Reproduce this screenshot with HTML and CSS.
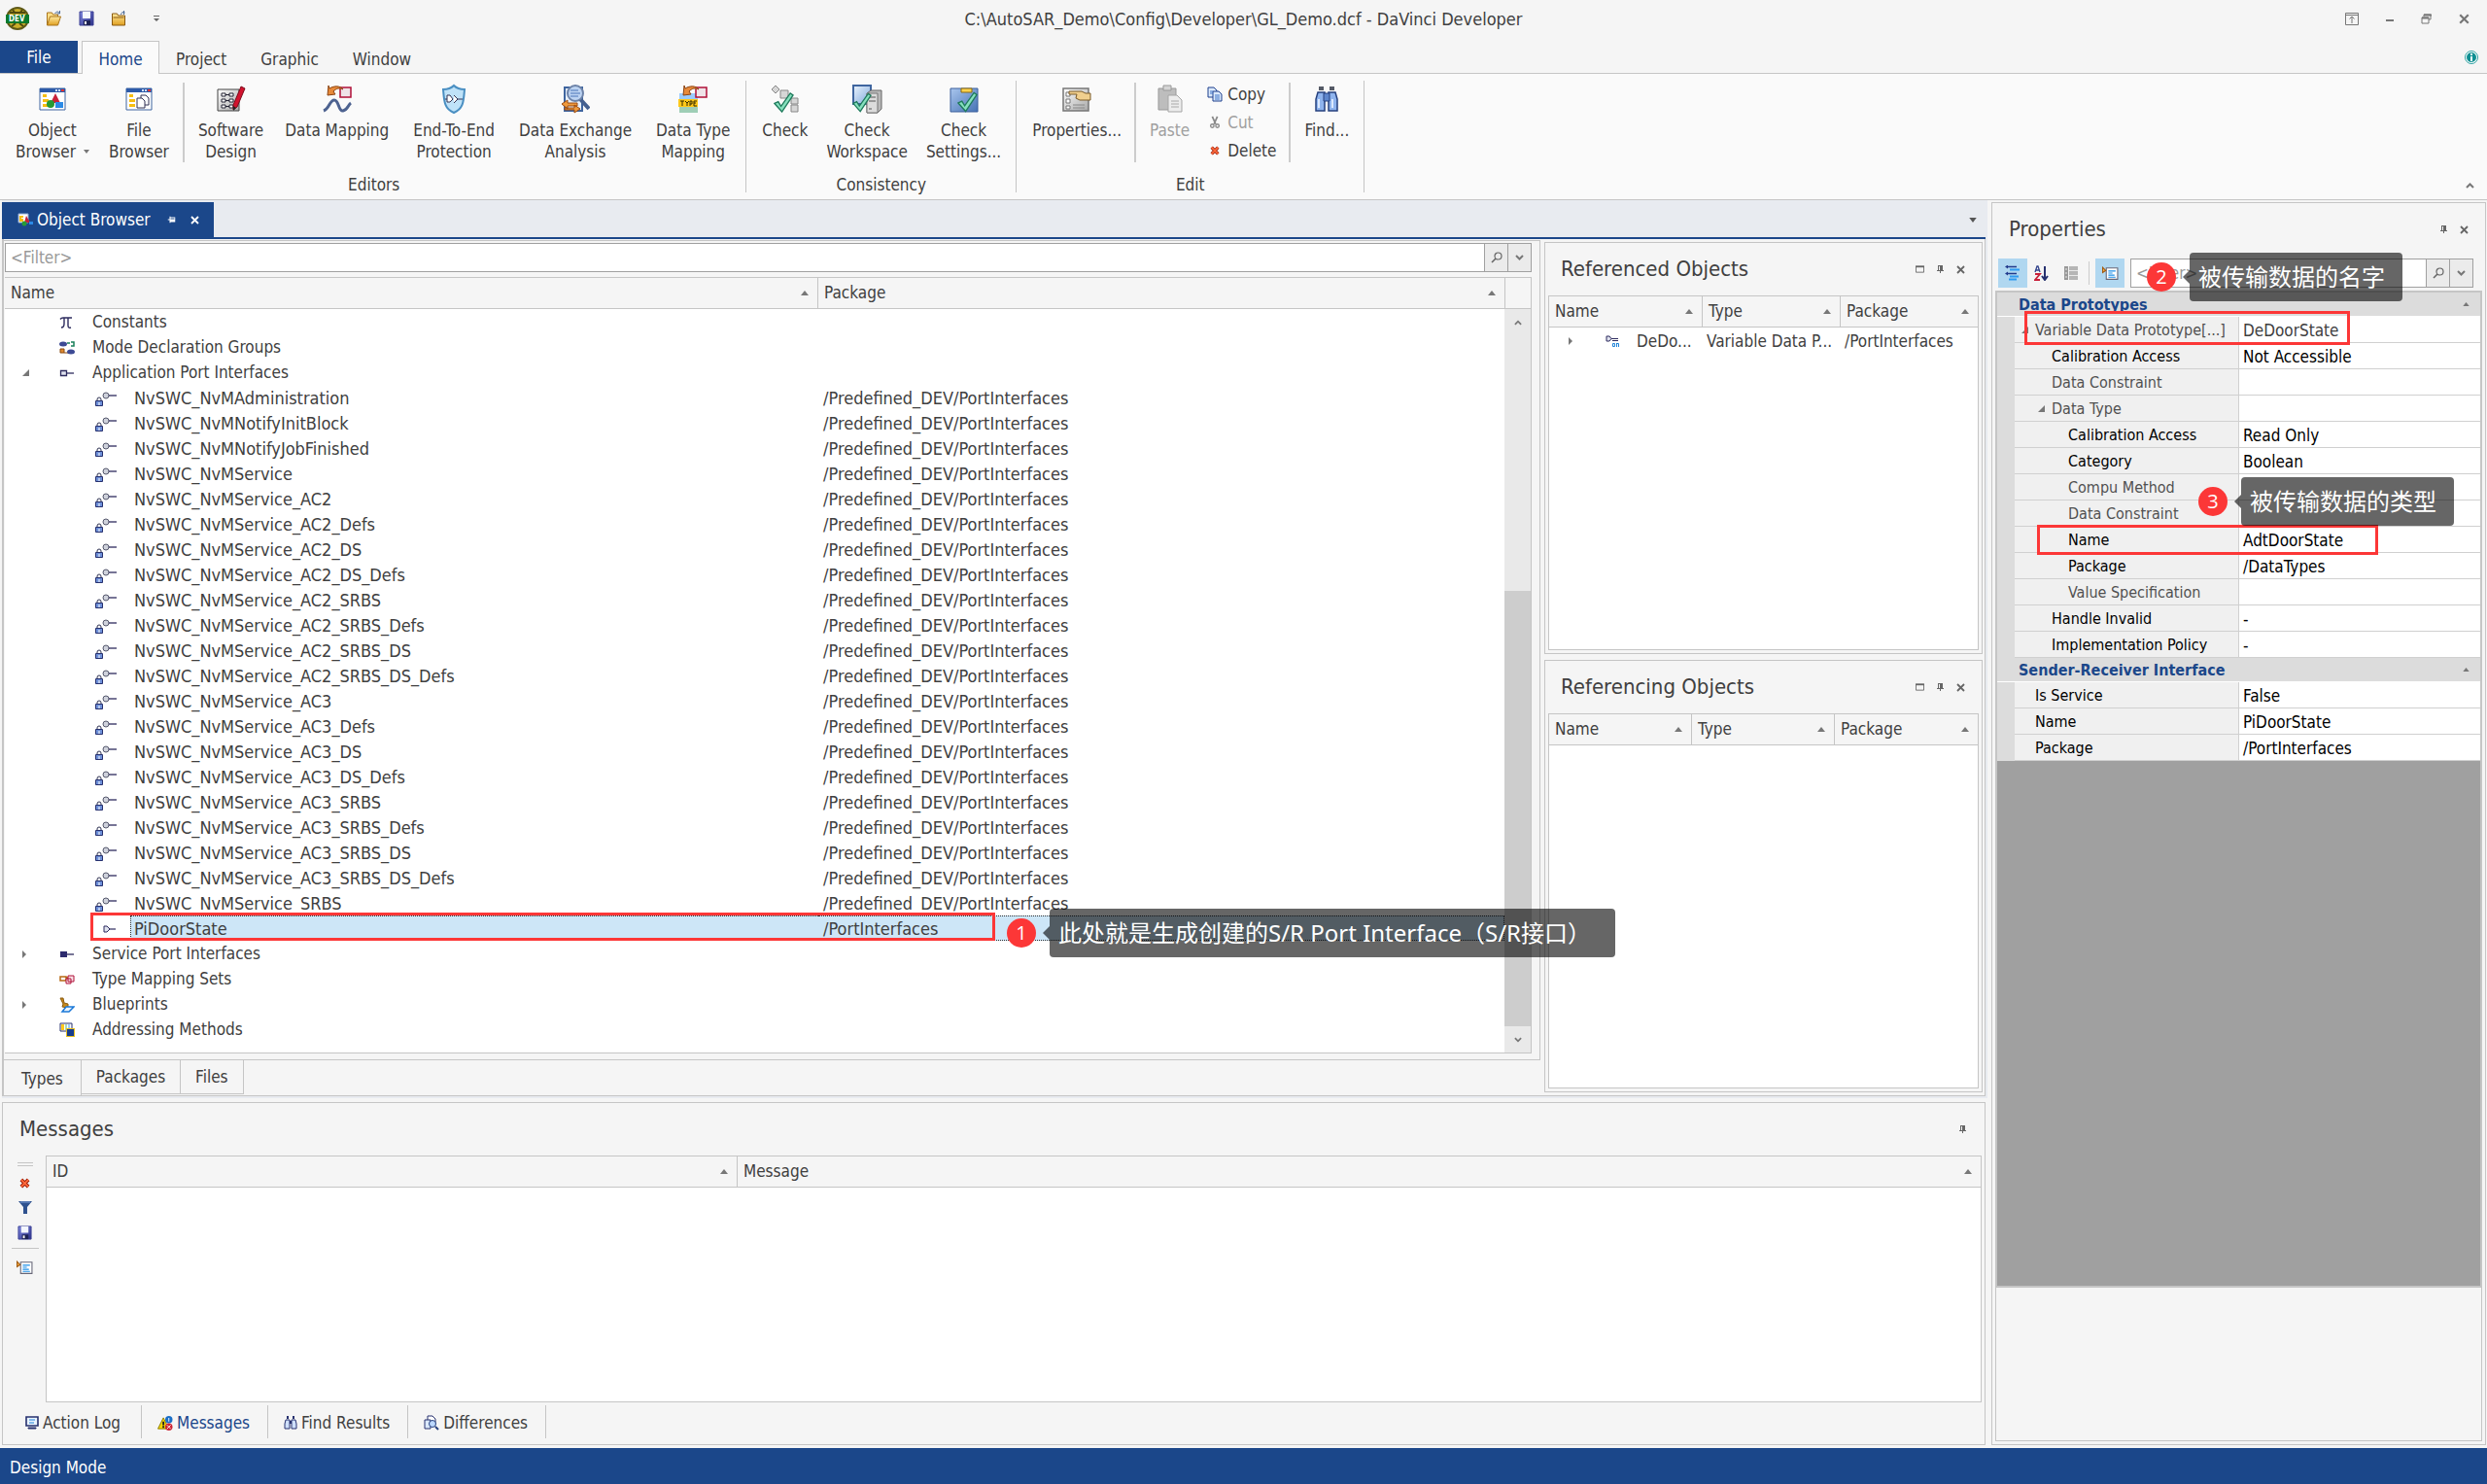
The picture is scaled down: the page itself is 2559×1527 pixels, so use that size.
FILE: index.html
```html
<!DOCTYPE html>
<html lang="en">
<head>
<meta charset="utf-8">
<title>GL_Demo.dcf - DaVinci Developer</title>
<link rel="stylesheet" href="styles.css">
</head>
<body>
<svg class="sprite" aria-hidden="true">
  <defs>
    <linearGradient id="g-blue" x1="0" y1="0" x2="1" y2="1"><stop offset="0" stop-color="#eaf3fd"/><stop offset="1" stop-color="#7fa9dc"/></linearGradient>
    <linearGradient id="g-navy" x1="0" y1="0" x2="1" y2="1"><stop offset="0" stop-color="#8088e0"/><stop offset="1" stop-color="#2a2f86"/></linearGradient>
    <linearGradient id="g-gold" x1="0" y1="0" x2="0" y2="1"><stop offset="0" stop-color="#ffe9a0"/><stop offset="1" stop-color="#e0a020"/></linearGradient>
    <linearGradient id="g-grey" x1="0" y1="0" x2="1" y2="1"><stop offset="0" stop-color="#fff"/><stop offset="1" stop-color="#a8a8a8"/></linearGradient>
    <linearGradient id="g-folder" x1="0" y1="0" x2="1" y2="1"><stop offset="0" stop-color="#a9c6ee"/><stop offset="1" stop-color="#4672b4"/></linearGradient>
  </defs>
  <symbol id="app" viewBox="0 0 24 24"><ellipse cx="12" cy="12" rx="12" ry="12" fill="#5f5a18"/><ellipse cx="12" cy="12" rx="10" ry="10" fill="#c9ae2a"/><path d="M4 6h16M7 3l3 4M17 3l-3 4M6 20l4-3M18 20l-4-3" stroke="#4f4a10" stroke-width="2"/><rect y="8" width="24" height="9" fill="#0b7a2c"/></symbol>
  <symbol id="open" viewBox="0 0 16 16"><path d="M1 15V2h5l1 2h5v3" fill="#ffe08a" stroke="#a8741c"/><path d="M1 15 4 6h11l-3 9z" fill="url(#g-gold)" stroke="#a8741c"/><path d="M9 3c2-3 4-2 5 0m0-3v3h-3" fill="none" stroke="#4b6a96"/></symbol>
  <symbol id="save" viewBox="0 0 16 16"><path d="M1 1h14v14H1z" fill="url(#g-navy)" stroke="#3a3f94"/><path d="M4 1h8v7H4z" fill="#f3f6ff"/><path d="M5 10h7v5H5z" fill="#1c2152"/><path d="M6 11h2v3H6z" fill="#fff"/></symbol>
  <symbol id="close-prj" viewBox="0 0 16 16"><path d="M1 15V3h5l1 2h7v10z" fill="url(#g-gold)" stroke="#8a5a10"/><path d="M2 7h11" stroke="#8a5a10"/><path d="M10 4c0-2 2-3 4-2m-1-2v4" fill="none" stroke="#4b6a96" stroke-width="1"/></symbol>
  <symbol id="dd" viewBox="0 0 6 4"><path d="M0 0h6L3 4z" fill="currentColor"/></symbol>
  <symbol id="qat" viewBox="0 0 6 6"><path d="M0 0h6v1H0zM0 3h6L3 6z" fill="#666"/></symbol>
  <symbol id="up" viewBox="0 0 8 5"><path d="M0 5h8L4 0z" fill="#777"/></symbol>
  <symbol id="obj" viewBox="0 0 28 28"><path d="M1 3h26v22H1z" fill="#fff" stroke="#3f659f"/><path d="M1 3h26v4H1z" fill="#2c5aa8"/><path d="M17 4h2v2h-2zM20 4h2v2h-2z" fill="#cfe0ff"/><path d="M23 4h3v2h-3z" fill="#e33"/><path d="M4 9h4v3H4zM4 14h6v3H4zM4 19h6v3H4z" fill="#f6be12"/><path d="m17 8 5 10H12z" fill="#c8203a"/><circle cx="12" cy="19" r="4" fill="#279a34"/><path d="M17 17h8v6h-8z" fill="#2b8ae6"/></symbol>
  <symbol id="obj-s" viewBox="0 0 16 14"><path d="M1 1h10v9H1z" fill="#fff" stroke="#8fa8d0"/><path d="M2 3h4v2H4v1h2v3H2z" fill="#f6be12"/><path d="m9 3 4 7H7z" fill="#c8203a"/><circle cx="7" cy="11" r="2.500" fill="#279a34"/><path d="M12 9h4v3h-4z" fill="#2b8ae6"/></symbol>
  <symbol id="filebr" viewBox="0 0 28 28"><path d="M1 3h26v22H1z" fill="#fff" stroke="#3f659f"/><path d="M1 3h26v4H1z" fill="#2c5aa8"/><path d="M17 4h2v2h-2zM20 4h2v2h-2z" fill="#cfe0ff"/><path d="M23 4h3v2h-3z" fill="#e33"/><path d="M4 9h4v3H4zM4 14h6v3H4zM4 19h6v3H4z" fill="#f6be12"/><path d="M16 10h5l3 3v7h-8z" fill="#fff" stroke="#335"/><path d="M12 13h5l3 3v7h-8z" fill="#fff" stroke="#335"/></symbol>
  <symbol id="swdesign" viewBox="0 0 30 30"><path d="M1 5h22v22H1z" fill="url(#g-grey)" stroke="#444"/><path d="M5 9h4v3H5zM5 15h4v3H5zM5 21h4v3H5zM13 9h4v3h-4zM13 15h4v3h-4zM13 21h4v3h-4z" fill="#fff" stroke="#223"/><path d="M9 10.500h4M9 16.500h4M9 22.500h4" stroke="#223"/><path d="m17 21 8-19 4 2-8 19-4 3z" fill="#d2122e" stroke="#7a0c1c"/><path d="m17 22 3 2-3 3z" fill="#222"/></symbol>
  <symbol id="arrowbox" viewBox="0 0 30 14"><path d="M18 3h11v10H18z" fill="#efe3e8" stroke="#b01038" stroke-width="1.500"/><path d="m6 1 1 3c5-3 11-3 14 1-4-2-7-1-10 2l2 3-8 1z" fill="#e78a3a" stroke="#8a4210"/></symbol>
  <symbol id="datamap" viewBox="0 0 30 30"><use href="#arrowbox" width="30" height="14"/><path d="M1 27c6-2 6-11 11-11s4 12 9 11 5-6 8-8" fill="none" stroke="#4d6290" stroke-width="3"/></symbol>
  <symbol id="e2e" viewBox="0 0 24 30"><path d="M12 1c3 3 6 4 11 4-1 12-1 20-11 24C2 25 2 17 1 5c5 0 8-1 11-4z" fill="#bfe2f8" stroke="#4a8fc2" stroke-width="2"/><path d="M5 11v7h3l3-3-3-4zM12 11l4 4-4 4M3 15h2M16 15h5" fill="#fff" stroke="#335"/></symbol>
  <symbol id="exch" viewBox="0 0 30 30"><path d="M4 3h18v24H4z" fill="#e8f1fc" stroke="#3f659f" stroke-width="2"/><path d="m20 15 9 10" stroke="#44608f" stroke-width="4"/><circle cx="15" cy="9" r="8" fill="#bcd3f2" stroke="#6d83a8" stroke-width="2"/><path d="M10 6h8M10 9h10M10 12h8" stroke="#4b74b8"/><path d="m1 20 6-4v3h10v3H7v3zM20 25l-6 4v-3H4v-2h10v-3z" fill="#f09a3c" stroke="#9a4a10"/></symbol>
  <symbol id="dtm" viewBox="0 0 30 30"><path d="M1 9h19v7H1z" fill="#9accff"/><path d="M1 22h19v7H1z" fill="#9fceb6"/><path d="M0 15h20v8H0z" fill="#ffc81a"/><path d="M2 17h4M4 17v5M7 17l2 2 2-2M9 19v3M12 22v-5h2v3h-2M19 17h-3v5h3M16 19h2" fill="none" stroke="#332a00"/><use href="#arrowbox" width="30" height="14"/></symbol>
  <symbol id="tick" viewBox="0 0 22 22"><path d="m1 12 4-2 3 5L18 1l3 2L9 21z" fill="#86e0bd" stroke="#1f7a5c" stroke-width="1.4"/></symbol>
  <symbol id="check" viewBox="0 0 30 30"><path d="m5 1 4 4-4 4-4-4zM10 6h8v8h-8zM21 14h7v6h-7zM21 21h7v7h-7z" fill="#d6d6d6" stroke="#888"/><use href="#tick" x="3" y="8" width="21" height="21"/></symbol>
  <symbol id="checkws" viewBox="0 0 32 30"><path d="M2 1h18v19H2z" fill="url(#g-blue)" stroke="#3f659f" stroke-width="2"/><path d="m16 9 4-3h11v19l-4 4H16z" fill="#b9b9b9" stroke="#666"/><path d="M16 9h11v20H16z" fill="#dcdcdc" stroke="#777"/><path d="M18 13h7M18 17h7M18 25h3" stroke="#555"/><use href="#tick" x="1" y="8" width="20" height="21"/></symbol>
  <symbol id="checkset" viewBox="0 0 30 30"><path d="M1 4h28v24H1z" fill="url(#g-folder)" stroke="#3a5f9c"/><path d="M12 4h11v4H12z" fill="#ffd34d" stroke="#8a6a10"/><use href="#tick" x="8" y="7" width="21" height="22"/></symbol>
  <symbol id="props" viewBox="0 0 30 28"><path d="M1 3h26v23H1z" fill="url(#g-grey)" stroke="#777" stroke-width="1.500"/><path d="M4 7h4v4H4zM4 14h4v4H4zM4 21h4v3H4z" fill="#fff" stroke="#777"/><path d="M11 20h12M11 23h12" stroke="#888"/><path d="M7 6h13l4 2h5v7H18l-4-2 1-4H7z" fill="#f1cf8e" stroke="#7a5a28"/></symbol>
  <symbol id="paste" viewBox="0 0 28 30"><path d="M2 4h18v22H2z" fill="#bdbdbd" stroke="#999"/><path d="M7 1h8v5H7z" fill="#d5d5d5" stroke="#999"/><path d="M12 11h9l5 5v12H12z" fill="#ececec" stroke="#a5a5a5"/><path d="M15 17h8M15 20h8M15 23h8" stroke="#aaa"/></symbol>
  <symbol id="copy" viewBox="0 0 16 16"><path d="M1 1h6l3 3v7H1z" fill="#dbe9fb" stroke="#1d3f8c"/><path d="M6 5h6l3 3v7H6z" fill="#dbe9fb" stroke="#1d3f8c"/><path d="M8 9h5M8 11h5M8 13h5M3 5h3M3 7h3" stroke="#3f75c8"/></symbol>
  <symbol id="cut" viewBox="0 0 16 16"><path d="m5 1 4 9M11 1 7 10" stroke="#888" stroke-width="2"/><circle cx="5" cy="12" r="2" fill="none" stroke="#888" stroke-width="1.5"/><circle cx="11" cy="12" r="2" fill="none" stroke="#888" stroke-width="1.5"/></symbol>
  <symbol id="del" viewBox="0 0 12 12"><path d="m2 2 8 8M10 2l-8 8" stroke="#9a1c08" stroke-width="4"/><path d="m2 2 8 8M10 2l-8 8" stroke="#ff6a3c" stroke-width="2"/></symbol>
  <symbol id="find" viewBox="0 0 24 28"><path d="M4 1h5v4H4zM15 1h5v4h-5z" fill="#555a66"/><path d="M3 7h7v19H1V14zM21 7h-7v19h9V14z" fill="#8fb4ee" stroke="#26407e" stroke-width="1.5"/><path d="M9 8h6v8H9z" fill="#5e86cc" stroke="#26407e"/><path d="M4 14v9M18 14v9" stroke="#dbe9ff" stroke-width="2"/></symbol>
  <symbol id="find-s" viewBox="0 0 14 14"><path d="M3 0h2v3H3zM9 0h2v3H9zM6 5h2v3H6z" fill="#26306e"/><path d="M2 4h4v9H1V8zM12 4H8v9h5V8z" fill="#cfe0fb" stroke="#26306e"/></symbol>
  <symbol id="log-s" viewBox="0 0 14 14"><path d="M1 1h12v9H1z" fill="#e9f3ff" stroke="#26306e" stroke-width="1.6"/><path d="M4 4h6M4 7h5" stroke="#1e82d8"/><path d="M3 12h8v1H3z" fill="#26306e" stroke="#26306e"/></symbol>
  <symbol id="msg-s" viewBox="0 0 16 16"><path d="m6 2 6 12H0z" fill="#f8d800" stroke="#8a7a00"/><path d="M5 6h2v4H5zM5 11h2v2H5z" fill="#222"/><circle cx="12" cy="4" r="4" fill="#1a6fc8"/><path d="M11.500 2h1v4h-1z" fill="#fff"/><circle cx="12" cy="12" r="4" fill="#cc2233"/><path d="m10 10 4 4M14 10l-4 4" stroke="#fff"/></symbol>
  <symbol id="diff-s" viewBox="0 0 16 16"><path d="M4 1h5l3 3v6H4z" fill="#fff" stroke="#26306e"/><path d="M1 5h6v9H1z" fill="#dbe9fb" stroke="#26306e"/><circle cx="9" cy="9" r="3.500" fill="#bcd8ff" stroke="#26407e"/><path d="m12 12 3 3" stroke="#26407e" stroke-width="2"/></symbol>
  <symbol id="funnel" viewBox="0 0 14 14"><path d="M0 1h14L9 7v7H5V7z" fill="#2f528f"/><path d="M2 2h10" stroke="#7fa0d8"/></symbol>
  <symbol id="note" viewBox="0 0 16 14"><path d="M4 1.500h11v11H4z" fill="#fff" stroke="#667"/><path d="M6 4.500h7M6 6.500h4M6 8.500h6M6 10.500h7" stroke="#1e90e8"/><path d="M.500 1v5l3-2z" fill="#ffb347" stroke="#a05a10"/></symbol>
  <symbol id="pi" viewBox="0 0 14 14"><path d="M1 3.500Q2 2 4 2h9M5 2v6q0 4-3 4M9 2v8q0 3 3 2" fill="none" stroke="#2d2b5e" stroke-width="1.400"/></symbol>
  <symbol id="mode" viewBox="0 0 16 14"><ellipse cx="4" cy="3" rx="4" ry="2.500" fill="#3d4a94"/><path d="M8 2h3M12 1h3v4h-3" fill="none" stroke="#18805a" stroke-width="1.500"/><path d="M1 8h4v4H1zM5 12h4" fill="#e08a30" stroke="#8a4a10"/><ellipse cx="12" cy="11" rx="4" ry="2.500" fill="#3d4a94"/></symbol>
  <symbol id="port" viewBox="0 0 16 8"><path d="M1.500 1.500h6v5h-6z" fill="#dfe2ee" stroke="#2d2b5e" stroke-width="1.300"/><path d="M8 4h7" stroke="#2d2b5e" stroke-width="1.300"/></symbol>
  <symbol id="sport" viewBox="0 0 16 8"><path d="M1 1h7v6H1z" fill="#2d2b6e"/><path d="M8 4h7" stroke="#2d2b5e" stroke-width="1.300"/></symbol>
  <symbol id="dport" viewBox="0 0 13 8"><path d="M1 1h3l3 3-3 3H1z" fill="#dfe2ee" stroke="#2d2b5e"/><path d="M7 4h6" stroke="#2d2b5e" stroke-width="1.200"/></symbol>
  <symbol id="locked" viewBox="0 0 22 16"><path d="M8 5a3 3 0 1 1 6 0 3 3 0 1 1-6 0" fill="#cfd2dc" stroke="#55586c"/><path d="M14 5h8" stroke="#2d2b5e" stroke-width="1.300"/><path d="M2 11V9q0-2 2-2t2 2v2" fill="none" stroke="#2d3050"/><path d="M.5 10.500h7v5h-7z" fill="#6d8fd8" stroke="#26306e"/><path d="M4 12v3" stroke="#fff"/></symbol>
  <symbol id="tms" viewBox="0 0 16 10"><path d="M1 2h6v4H1zM6 2l4 2" fill="none" stroke="#b86a14" stroke-width="1.500"/><path d="M9 1h6v6H9zM7 4h5v5H7z" fill="#f8e0e6" stroke="#b01038"/></symbol>
  <symbol id="blue" viewBox="0 0 16 16"><path d="M1 1h3l1 5 4 1v4l-6-1 1-3z" fill="#c88a1c" stroke="#8a5a10"/><path d="M7 10h8l-5 5H3z" fill="#eaf4ff" stroke="#1a78d8" stroke-width="1.500"/></symbol>
  <symbol id="addr" viewBox="0 0 16 16"><path d="M1 1h12v8H1z" fill="#fff" stroke="#26306e"/><path d="M2 2h3v6H2z" fill="#ffc81a"/><path d="M6 2h2v6H6z" fill="#a8d8b8"/><path d="M9 2h2v6H9z" fill="#9accff"/><path d="M7 6h9v9H7z" fill="#e8c020"/><path d="M8 7h7v7H8z" fill="#163c8c"/></symbol>
  <symbol id="vdp" viewBox="0 0 14 12"><path d="M1 1h3l2 2.500L4 6H1z" fill="#dfe2ee" stroke="#2d2b5e"/><path d="M6 3.500h7M7 5.500h6" stroke="#2d2b5e"/><path d="M7.500 8.500h2v3h-2zM11 8.500h2.500V12M11.500 8v4" fill="none" stroke="#1e82d8"/></symbol>
  <symbol id="collapsed" viewBox="0 0 5 8"><path d="M0 0v8l4-4z" fill="#777"/></symbol>
  <symbol id="expanded" viewBox="0 0 7 7"><path d="M7 0v7H0z" fill="#777"/></symbol>
  <symbol id="pin" viewBox="0 0 7 8"><path d="M1 0h5v5h1v1H4v2H3V6H0V5h1zM2 1v4h1V1z" fill="currentColor" fill-rule="evenodd"/></symbol>
  <symbol id="x" viewBox="0 0 9 9"><path d="m1 1 7 7M8 1 1 8" stroke="currentColor" stroke-width="1.800"/></symbol>
  <symbol id="max" viewBox="0 0 10 8"><path d="M.5 1h9v6.500h-9z" fill="none" stroke="currentColor"/><path d="M0 1h10" stroke="currentColor" stroke-width="2"/></symbol>
  <symbol id="glass" viewBox="0 0 12 12"><circle cx="7.500" cy="4.500" r="3.500" fill="none" stroke="#666" stroke-width="1.200"/><path d="m5 7-4 4" stroke="#666" stroke-width="1.600"/></symbol>
  <symbol id="chev" viewBox="0 0 9 6"><path d="m1 1 3.500 3.500L8 1" fill="none" stroke="#777" stroke-width="2"/></symbol>
  <symbol id="ribmin" viewBox="0 0 14 13"><path d="M.5.5h13v12H.5zM0 2.500h14M7 11V4M4.500 6.500 7 4l2.500 2.500" fill="none" stroke="#777"/></symbol>
  <symbol id="restore" viewBox="0 0 11 11"><path d="M3 3V1h7v5H8M1 4h7v6H1z" fill="none" stroke="#777"/><path d="M3 1.500h8M1 4.500h7" stroke="#777" stroke-width="2"/></symbol>
  <symbol id="info" viewBox="0 0 14 14"><circle cx="7" cy="7" r="6.500" fill="#fff" stroke="#2aa0a0"/><circle cx="7" cy="7" r="5" fill="#0e8f92"/><path d="M6 6h2v5H6zM6 3h2v2H6z" fill="#fff"/></symbol>
  <symbol id="categ" viewBox="0 0 16 16"><path d="M2 1.500h10M2 8.500h10" stroke="#223a8c" stroke-width="1.500"/><path d="M5 4.500h10M5 11.500h9M4 14.500h8" stroke="#2f9bf0" stroke-width="1.800"/><path d="m0 1.500 3-2v4zM0 8.500l3-2v4z" fill="#223a8c"/></symbol>
  <symbol id="az" viewBox="0 0 16 16"><path d="m1 7 2-6h1l2 6M2 5h3" fill="none" stroke="#33448c" stroke-width="1.300"/><path d="M1 9h5l-5 6h5" fill="none" stroke="#c8203a" stroke-width="1.800"/><path d="M11 1v13M8 11l3 4 3-4" fill="none" stroke="#26306e" stroke-width="2"/></symbol>
  <symbol id="pages" viewBox="0 0 14 14"><path d="M0 0h4v14H0z" fill="#999"/><path d="M5 0h9v14H5z" fill="#b5b5b5"/><path d="M5 4.500h9M5 9.500h9M1 3h2M1 7h2M1 11h2" stroke="#e8e8e8"/></symbol>
</svg>

<header class="titlebar">
  <div class="quick">
    <span class="app-logo"><svg width="24" height="24"><use href="#app"/></svg><b>DEV</b></span>
    <button aria-label="Open"><svg width="17" height="16"><use href="#open"/></svg></button>
    <button aria-label="Save"><svg width="16" height="16"><use href="#save"/></svg></button>
    <button aria-label="Close project"><svg width="17" height="16"><use href="#close-prj"/></svg></button>
    <button aria-label="Customize"><svg width="6" height="6"><use href="#qat"/></svg></button>
  </div>
  <h1>C:\AutoSAR_Demo\Config\Developer\GL_Demo.dcf - DaVinci Developer</h1>
  <div class="winbtns">
    <button aria-label="Ribbon display"><svg width="14" height="13"><use href="#ribmin"/></svg></button>
    <button aria-label="Minimize"><i class="dash"></i></button>
    <button aria-label="Restore"><svg width="11" height="11"><use href="#restore"/></svg></button>
    <button aria-label="Close"><svg width="11" height="11"><use href="#x"/></svg></button>
  </div>
</header>

<nav class="tabs">
  <button class="file">File</button>
  <button class="on">Home</button>
  <button>Project</button>
  <button>Graphic</button>
  <button>Window</button>
  <button class="info" aria-label="About"><svg width="14" height="14"><use href="#info"/></svg></button>
</nav>

<section class="ribbon">
  <div class="group">
    <div class="row">
      <button class="big wide"><svg width="28" height="28"><use href="#obj"/></svg><span>Object</span><span class="drop">Browser <svg width="6" height="4"><use href="#dd"/></svg></span></button>
      <button class="big wide"><svg width="28" height="28"><use href="#filebr"/></svg><span>File</span><span>Browser</span></button>
      <hr>
      <button class="big"><svg width="30" height="30"><use href="#swdesign"/></svg><span>Software</span><span>Design</span></button>
      <button class="big roomy"><svg width="30" height="30"><use href="#datamap"/></svg><span>Data Mapping</span></button>
      <button class="big roomy"><svg width="24" height="30"><use href="#e2e"/></svg><span>End-To-End</span><span>Protection</span></button>
      <button class="big roomy"><svg width="30" height="30"><use href="#exch"/></svg><span>Data Exchange</span><span>Analysis</span></button>
      <button class="big roomy"><svg width="30" height="30"><use href="#dtm"/></svg><span>Data Type</span><span>Mapping</span></button>
    </div>
    <p>Editors</p>
  </div>
  <div class="group">
    <div class="row">
      <button class="big"><svg width="30" height="30"><use href="#check"/></svg><span>Check</span></button>
      <button class="big"><svg width="32" height="30"><use href="#checkws"/></svg><span>Check</span><span>Workspace</span></button>
      <button class="big"><svg width="30" height="30"><use href="#checkset"/></svg><span>Check</span><span>Settings...</span></button>
    </div>
    <p>Consistency</p>
  </div>
  <div class="group">
    <div class="row">
      <button class="big"><svg width="30" height="28"><use href="#props"/></svg><span>Properties...</span></button>
      <hr>
      <button class="big off"><svg width="28" height="30"><use href="#paste"/></svg><span>Paste</span></button>
      <div class="stack">
        <button><svg width="16" height="16"><use href="#copy"/></svg>Copy</button>
        <button class="off"><svg width="16" height="14"><use href="#cut"/></svg>Cut</button>
        <button><svg width="16" height="10"><use href="#del"/></svg>Delete</button>
      </div>
      <hr>
      <button class="big"><svg width="24" height="28"><use href="#find"/></svg><span>Find...</span></button>
    </div>
    <p>Edit</p>
  </div>
  <button class="fold" aria-label="Collapse ribbon"><svg width="9" height="6" class="flip"><use href="#chev"/></svg></button>
</section>

<main>
  <div class="left">
    <section class="document">
      <div class="doctabs">
        <div class="doctab"><svg width="16" height="14"><use href="#obj-s"/></svg>Object Browser
          <button aria-label="Pin"><svg width="7" height="8" class="turn"><use href="#pin"/></svg></button>
          <button aria-label="Close tab"><svg width="9" height="9"><use href="#x"/></svg></button></div>
        <button class="doclist" aria-label="Documents"><svg width="8" height="5"><use href="#dd"/></svg></button>
      </div>
      <div class="docbody">
        <div class="browser">
          <div class="treepane">
            <div class="filter"><input aria-label="Filter objects" placeholder="&lt;Filter&gt;"><button aria-label="Search"><svg width="12" height="12"><use href="#glass"/></svg></button><button aria-label="Filter options"><svg width="9" height="6"><use href="#chev"/></svg></button></div>
            <div class="tree">
              <table>
                <colgroup><col class="c-name"><col></colgroup>
                <thead><tr><th>Name<svg width="8" height="5"><use href="#up"/></svg></th><th>Package<svg width="8" height="5"><use href="#up"/></svg></th></tr></thead>
                <tbody>
                <tr class="l1"><td><div><i></i><b><svg width="14" height="14"><use href="#pi"/></svg></b>Constants</div></td><td></td></tr>
                <tr class="l1"><td><div><i></i><b><svg width="16" height="14"><use href="#mode"/></svg></b>Mode Declaration Groups</div></td><td></td></tr>
                <tr class="l1"><td><div><i><svg width="7" height="7"><use href="#expanded"/></svg></i><b><svg width="16" height="8"><use href="#port"/></svg></b>Application Port Interfaces</div></td><td></td></tr>
                <tr class="l2"><td><div><b><svg width="22" height="16"><use href="#locked"/></svg></b>NvSWC_NvMAdministration</div></td><td>/Predefined_DEV/PortInterfaces</td></tr>
                <tr class="l2"><td><div><b><svg width="22" height="16"><use href="#locked"/></svg></b>NvSWC_NvMNotifyInitBlock</div></td><td>/Predefined_DEV/PortInterfaces</td></tr>
                <tr class="l2"><td><div><b><svg width="22" height="16"><use href="#locked"/></svg></b>NvSWC_NvMNotifyJobFinished</div></td><td>/Predefined_DEV/PortInterfaces</td></tr>
                <tr class="l2"><td><div><b><svg width="22" height="16"><use href="#locked"/></svg></b>NvSWC_NvMService</div></td><td>/Predefined_DEV/PortInterfaces</td></tr>
                <tr class="l2"><td><div><b><svg width="22" height="16"><use href="#locked"/></svg></b>NvSWC_NvMService_AC2</div></td><td>/Predefined_DEV/PortInterfaces</td></tr>
                <tr class="l2"><td><div><b><svg width="22" height="16"><use href="#locked"/></svg></b>NvSWC_NvMService_AC2_Defs</div></td><td>/Predefined_DEV/PortInterfaces</td></tr>
                <tr class="l2"><td><div><b><svg width="22" height="16"><use href="#locked"/></svg></b>NvSWC_NvMService_AC2_DS</div></td><td>/Predefined_DEV/PortInterfaces</td></tr>
                <tr class="l2"><td><div><b><svg width="22" height="16"><use href="#locked"/></svg></b>NvSWC_NvMService_AC2_DS_Defs</div></td><td>/Predefined_DEV/PortInterfaces</td></tr>
                <tr class="l2"><td><div><b><svg width="22" height="16"><use href="#locked"/></svg></b>NvSWC_NvMService_AC2_SRBS</div></td><td>/Predefined_DEV/PortInterfaces</td></tr>
                <tr class="l2"><td><div><b><svg width="22" height="16"><use href="#locked"/></svg></b>NvSWC_NvMService_AC2_SRBS_Defs</div></td><td>/Predefined_DEV/PortInterfaces</td></tr>
                <tr class="l2"><td><div><b><svg width="22" height="16"><use href="#locked"/></svg></b>NvSWC_NvMService_AC2_SRBS_DS</div></td><td>/Predefined_DEV/PortInterfaces</td></tr>
                <tr class="l2"><td><div><b><svg width="22" height="16"><use href="#locked"/></svg></b>NvSWC_NvMService_AC2_SRBS_DS_Defs</div></td><td>/Predefined_DEV/PortInterfaces</td></tr>
                <tr class="l2"><td><div><b><svg width="22" height="16"><use href="#locked"/></svg></b>NvSWC_NvMService_AC3</div></td><td>/Predefined_DEV/PortInterfaces</td></tr>
                <tr class="l2"><td><div><b><svg width="22" height="16"><use href="#locked"/></svg></b>NvSWC_NvMService_AC3_Defs</div></td><td>/Predefined_DEV/PortInterfaces</td></tr>
                <tr class="l2"><td><div><b><svg width="22" height="16"><use href="#locked"/></svg></b>NvSWC_NvMService_AC3_DS</div></td><td>/Predefined_DEV/PortInterfaces</td></tr>
                <tr class="l2"><td><div><b><svg width="22" height="16"><use href="#locked"/></svg></b>NvSWC_NvMService_AC3_DS_Defs</div></td><td>/Predefined_DEV/PortInterfaces</td></tr>
                <tr class="l2"><td><div><b><svg width="22" height="16"><use href="#locked"/></svg></b>NvSWC_NvMService_AC3_SRBS</div></td><td>/Predefined_DEV/PortInterfaces</td></tr>
                <tr class="l2"><td><div><b><svg width="22" height="16"><use href="#locked"/></svg></b>NvSWC_NvMService_AC3_SRBS_Defs</div></td><td>/Predefined_DEV/PortInterfaces</td></tr>
                <tr class="l2"><td><div><b><svg width="22" height="16"><use href="#locked"/></svg></b>NvSWC_NvMService_AC3_SRBS_DS</div></td><td>/Predefined_DEV/PortInterfaces</td></tr>
                <tr class="l2"><td><div><b><svg width="22" height="16"><use href="#locked"/></svg></b>NvSWC_NvMService_AC3_SRBS_DS_Defs</div></td><td>/Predefined_DEV/PortInterfaces</td></tr>
                <tr class="l2"><td><div><b><svg width="22" height="16"><use href="#locked"/></svg></b>NvSWC_NvMService_SRBS</div></td><td>/Predefined_DEV/PortInterfaces</td></tr>
                <tr class="l2 sel"><td><div><b><svg width="13" height="8"><use href="#dport"/></svg></b>PiDoorState</div>
                  <span class="mark m1"></span><span class="num n1">1</span><span class="tip t1">此处就是生成创建的S/R Port Interface（S/R接口）</span></td><td>/PortInterfaces</td></tr>
                <tr class="l1"><td><div><i><svg width="5" height="8"><use href="#collapsed"/></svg></i><b><svg width="16" height="8"><use href="#sport"/></svg></b>Service Port Interfaces</div></td><td></td></tr>
                <tr class="l1"><td><div><i></i><b><svg width="16" height="10"><use href="#tms"/></svg></b>Type Mapping Sets</div></td><td></td></tr>
                <tr class="l1"><td><div><i><svg width="5" height="8"><use href="#collapsed"/></svg></i><b><svg width="16" height="16"><use href="#blue"/></svg></b>Blueprints</div></td><td></td></tr>
                <tr class="l1"><td><div><i></i><b><svg width="16" height="16"><use href="#addr"/></svg></b>Addressing Methods</div></td><td></td></tr>
                </tbody>
              </table>
              <div class="scroll"><div class="corner"></div><button aria-label="Scroll up"><svg width="8" height="6" class="flip"><use href="#chev"/></svg></button><div class="track"></div><div class="thumb"></div><button aria-label="Scroll down"><svg width="8" height="6"><use href="#chev"/></svg></button></div>
            </div>
          </div>
          <div class="viewtabs"><button class="on">Types</button><button>Packages</button><button>Files</button></div>
        </div>
        <aside class="refs">
          <section class="panel">
            <header><h2>Referenced Objects</h2><button aria-label="Maximize"><svg width="9" height="8"><use href="#max"/></svg></button><button aria-label="Pin"><svg width="7" height="8"><use href="#pin"/></svg></button><button aria-label="Close"><svg width="9" height="9"><use href="#x"/></svg></button></header>
            <div class="grid"><table class="ref-a">
              <colgroup><col><col><col></colgroup>
              <thead><tr><th>Name<svg width="8" height="5"><use href="#up"/></svg></th><th>Type<svg width="8" height="5"><use href="#up"/></svg></th><th>Package<svg width="8" height="5"><use href="#up"/></svg></th></tr></thead>
              <tbody><tr><td><div><i><svg width="5" height="8"><use href="#collapsed"/></svg></i><b><svg width="14" height="12"><use href="#vdp"/></svg></b>DeDo...</div></td><td>Variable Data P...</td><td>/PortInterfaces</td></tr></tbody>
            </table></div>
          </section>
          <section class="panel">
            <header><h2>Referencing Objects</h2><button aria-label="Maximize"><svg width="9" height="8"><use href="#max"/></svg></button><button aria-label="Pin"><svg width="7" height="8"><use href="#pin"/></svg></button><button aria-label="Close"><svg width="9" height="9"><use href="#x"/></svg></button></header>
            <div class="grid"><table class="ref-b">
              <colgroup><col><col><col></colgroup>
              <thead><tr><th>Name<svg width="8" height="5"><use href="#up"/></svg></th><th>Type<svg width="8" height="5"><use href="#up"/></svg></th><th>Package<svg width="8" height="5"><use href="#up"/></svg></th></tr></thead>
            </table></div>
          </section>
        </aside>
      </div>
    </section>

    <section class="messages panel">
      <header><h2>Messages</h2><button aria-label="Pin"><svg width="7" height="8"><use href="#pin"/></svg></button></header>
      <div class="msgbody">
        <div class="tools">
          <span class="grip"></span>
          <button aria-label="Delete"><svg width="11" height="11"><use href="#del"/></svg></button>
          <button aria-label="Filter"><svg width="14" height="14"><use href="#funnel"/></svg></button>
          <button aria-label="Save"><svg width="15" height="15"><use href="#save"/></svg></button>
          <hr>
          <button aria-label="Details"><svg width="17" height="15"><use href="#note"/></svg></button>
        </div>
        <div class="grid"><table class="msgs">
          <colgroup><col><col></colgroup>
          <thead><tr><th>ID<svg width="8" height="5"><use href="#up"/></svg></th><th>Message<svg width="8" height="5"><use href="#up"/></svg></th></tr></thead>
        </table></div>
      </div>
      <nav class="bottomtabs">
        <button><svg width="14" height="14"><use href="#log-s"/></svg>Action Log</button>
        <button class="on"><svg width="16" height="15"><use href="#msg-s"/></svg>Messages</button>
        <button><svg width="14" height="14"><use href="#find-s"/></svg>Find Results</button>
        <button><svg width="16" height="16"><use href="#diff-s"/></svg>Differences</button>
      </nav>
    </section>
  </div>

  <section class="properties panel">
    <header><h2>Properties</h2><button aria-label="Pin"><svg width="7" height="8"><use href="#pin"/></svg></button><button aria-label="Close"><svg width="9" height="9"><use href="#x"/></svg></button></header>
    <div class="ptools">
      <button class="on" aria-label="Categorized"><svg width="16" height="16"><use href="#categ"/></svg></button>
      <button aria-label="Alphabetical"><svg width="16" height="16"><use href="#az"/></svg></button>
      <button aria-label="Property pages"><svg width="14" height="14"><use href="#pages"/></svg></button>
      <hr>
      <button class="on" aria-label="Description"><svg width="17" height="15"><use href="#note"/></svg></button>
      <div class="filter"><input aria-label="Filter properties" placeholder="&lt;Filter&gt;"><button aria-label="Search"><svg width="12" height="12"><use href="#glass"/></svg></button><button aria-label="Filter options"><svg width="9" height="6"><use href="#chev"/></svg></button></div>
      <span class="num n2">2</span><span class="tip t2">被传输数据的名字</span>
    </div>
    <div class="pgrid">
      <table>
        <colgroup><col class="gut"><col class="lab"><col></colgroup>
        <tbody>
        <tr class="cat"><th colspan="3">Data Prototypes<svg width="7" height="4"><use href="#up"/></svg></th></tr>
        <tr class="d1 ro"><td></td><th><svg class="tw" width="7" height="7"><use href="#expanded"/></svg>Variable Data Prototype[...]<span class="mark m2"></span></th><td class="grey">DeDoorState</td></tr>
        <tr class="d2"><td></td><th>Calibration Access</th><td>Not Accessible</td></tr>
        <tr class="d2 ro"><td></td><th>Data Constraint</th><td></td></tr>
        <tr class="d2 ro"><td></td><th><svg class="tw" width="7" height="7"><use href="#expanded"/></svg>Data Type</th><td></td></tr>
        <tr class="d3"><td></td><th>Calibration Access</th><td>Read Only</td></tr>
        <tr class="d3"><td></td><th>Category</th><td>Boolean</td></tr>
        <tr class="d3 ro"><td></td><th>Compu Method</th><td></td></tr>
        <tr class="d3 ro"><td></td><th>Data Constraint<span class="num n3">3</span><span class="tip t3">被传输数据的类型</span></th><td></td></tr>
        <tr class="d3"><td></td><th>Name<span class="mark m3"></span></th><td>AdtDoorState</td></tr>
        <tr class="d3"><td></td><th>Package</th><td>/DataTypes</td></tr>
        <tr class="d3 ro"><td></td><th>Value Specification</th><td></td></tr>
        <tr class="d2"><td></td><th>Handle Invalid</th><td>-</td></tr>
        <tr class="d2"><td></td><th>Implementation Policy</th><td>-</td></tr>
        <tr class="cat"><th colspan="3">Sender-Receiver Interface<svg width="7" height="4"><use href="#up"/></svg></th></tr>
        <tr class="d1"><td></td><th>Is Service</th><td>False</td></tr>
        <tr class="d1"><td></td><th>Name</th><td>PiDoorState</td></tr>
        <tr class="d1"><td></td><th>Package</th><td>/PortInterfaces</td></tr>
        </tbody>
      </table>
    </div>
    <div class="desc"></div>
  </section>
</main>

<footer>Design Mode</footer>
</body>
</html>
```
FILE: styles.css
```css
* { box-sizing: border-box; }

:root {
  --line: #c5c5c5;
  --blue: #1b478a;
  --bg: #f5f5f5;
  --work: #e8ebf0;
  --red: #fc3737;
}

body {
  margin: 0;
  min-height: 100vh;
  display: flex;
  flex-direction: column;
  background: var(--bg);
  color: #404040;
  font: 17px/22px "DejaVu Sans Condensed", "Noto Sans", "Noto Sans CJK SC", sans-serif;
}

button { font: inherit; color: inherit; background: none; border: 0; padding: 0; }
svg { display: block; flex: none; }
h1, h2, p { margin: 0; font-weight: normal; }
hr { margin: 0; border: 0; background: #ccc; }
i, b { font-style: normal; }
.sprite { position: absolute; width: 0; height: 0; }
.flip { transform: rotate(180deg); }
.turn { transform: rotate(90deg); }

/* Title bar */
.titlebar { display: grid; grid-template-columns: 1fr auto 1fr; align-items: center; height: 42px; }
.titlebar h1 { font-size: 18px; line-height: 22px; padding-bottom: 2px; }
.quick { display: flex; align-items: center; gap: 17px; padding: 0 6px 4px; }
.quick button:last-child { padding-left: 10px; }
.app-logo { position: relative; }
.app-logo b { position: absolute; left: 3px; top: 8px; color: #fff; font: bold 8px/9px "DejaVu Sans Condensed", sans-serif; }
.winbtns { display: flex; justify-content: flex-end; align-items: center; gap: 28px; padding: 0 18px 4px; color: #777; }
.dash { display: block; width: 8px; height: 2px; background: #777; margin-top: 4px; }

/* Ribbon tabs */
.tabs { display: flex; height: 34px; border-bottom: 1px solid var(--line); }
.tabs button { padding: 4px 18px 0 17px; }
.tabs .file { width: 80px; margin-right: 4px; padding: 0; background: var(--blue); color: #fff; }
.tabs .on { width: 80px; height: 34px; padding: 3px 0 0; border: 1px solid var(--line); border-bottom: 0; background: #fafafa; color: var(--blue); }
.tabs .info { margin-left: auto; padding: 0 9px; }

/* Ribbon */
.ribbon { display: flex; height: 130px; padding: 7px 0; background: #fafafa; border-bottom: 1px solid var(--line); }
.group { display: flex; flex-direction: column; justify-content: space-between; padding: 0 6px; border-right: 1px solid var(--line); }
.group:first-child { padding-right: 4px; }
.group p { text-align: center; line-height: 16px; }
.row { display: flex; height: 86px; }
.row hr { width: 2px; margin: 2px 4px; }
.big { display: flex; flex-direction: column; align-items: center; padding: 3px 9px 0 10px; line-height: 22px; white-space: nowrap; }
.big > svg { height: 32px; margin-bottom: 5px; }
.drop { display: flex; align-items: center; gap: 8px; }
.drop svg { color: #777; }
.wide { padding: 3px 10px 0; }
.roomy { padding: 3px 12px 0 13px; }
.off { color: #a0a0a0; }
.stack { display: flex; flex-direction: column; padding: 0 9px; }
.stack button { display: flex; align-items: center; gap: 5px; height: 30px; }
.fold { margin: auto 13px 4px auto; }

/* Work area */
main { flex: 1; display: grid; grid-template-columns: minmax(0, 1fr) 514px; }
.left { display: flex; flex-direction: column; padding-left: 2px; }
.panel { border: 1px solid var(--line); background: var(--bg); }
.panel > header { display: flex; align-items: center; gap: 13px; height: 54px; padding: 0 16px 0 17px; color: #666; }
.panel h2 { flex: 1; font-size: 22px; line-height: 28px; color: #404040; }

.document { background: var(--work); padding: 2px 2px 2px 0; }
.doctabs { display: flex; height: 38px; border-bottom: 2px solid var(--blue); }
.doctab { display: flex; align-items: center; width: 218px; padding-left: 16px; gap: 4px; background: var(--blue); color: #fff; white-space: nowrap; }
.doctab button { margin-left: 12px; }
.doctab button:first-of-type { margin-left: 14px; }
.doclist { margin: 0 9px 0 auto; color: #555; }
.docbody { display: grid; grid-template-columns: minmax(0, 1fr) 451px; gap: 4px; padding: 1px 2px 0 0; border: solid var(--line); border-width: 0 1px 1px 2px; background: var(--bg); }
.browser { display: flex; flex-direction: column; }
.treepane { border: solid var(--line); border-width: 1px 1px 1px 0; padding: 2px 8px 6px 1px; }
.filter { display: flex; height: 30px; border: 1px solid #a0a0a0; background: #fff; }
.filter input { flex: 1; min-width: 0; border: 0; padding: 0 0 0 5px; font: inherit; color: inherit; background: none; }
.filter input::placeholder { color: #999; opacity: 1; }
.filter button { display: flex; align-items: center; justify-content: center; width: 24px; border-left: 1px solid #a0a0a0; background: #ebebeb; }
.tree { display: grid; grid-template-columns: minmax(0, 1fr) 27px; margin-top: 5px; border: 1px solid var(--line); border-left: 0; background: #fff; }

table { width: 100%; border-collapse: separate; border-spacing: 0; table-layout: fixed; }
thead th { position: relative; height: 32px; padding: 0 0 1px 6px; text-align: left; font-weight: normal; background: var(--bg); border: solid var(--line); border-width: 0 1px 1px 0; }
thead th svg { position: absolute; right: 9px; top: 13px; }
thead th:last-child { border-right: 0; }

.tree table { align-self: start; margin-bottom: 11px; }
.c-name { width: 837px; }
.tree tbody { font-size: 18px; }
.tree td { position: relative; height: 26px; padding: 1px 0 0 5px; white-space: nowrap; line-height: 25px; }
.tree td div { display: flex; align-items: center; height: 25px; }
.tree .l1 { font-size: 17px; }
.tree td i { width: 25px; padding-left: 13px; }
.tree .l1 td b { padding-left: 26px; width: 60px; }
.tree .l2 td b { width: 128px; padding-left: 88px; }
.tree .sel td { background: #cde6f7; }
.tree .sel td:first-child { background: linear-gradient(to right, #fff 129px, #cde6f7 129px); }
.tree .sel td b { padding-left: 96px; }
.sel td::after { content: ""; position: absolute; inset: 0; border: 1px dotted #333; border-left: 0; }
.sel td:first-child::after { left: 129px; border-left: 1px dotted #333; border-right: 0; }
.scroll { display: flex; flex-direction: column; background: #e9e9e9; }
.corner { height: 32px; background: var(--bg); border-left: 1px solid var(--line); border-bottom: 1px solid var(--line); }
.scroll button { display: flex; align-items: center; justify-content: center; height: 27px; }
.track { flex: 263; }
.thumb { flex: 448; background: #cdcdcd; }

.viewtabs { display: flex; height: 36px; }
.viewtabs button { height: 35px; padding: 0 15px; border: 1px solid var(--line); border-top: 0; border-left: 0; }
.viewtabs .on { height: 36px; padding: 1px 18px 0; border-bottom: 0; }

.refs { display: grid; grid-template-rows: 424px 1fr; gap: 6px; padding: 2px 0 3px; }
.refs .panel { display: flex; flex-direction: column; padding: 0 3px 3px; }
.refs header { padding: 0 14px 0 13px; }
.grid { flex: 1; border: 1px solid var(--line); background: #fff; }
.refs td { height: 28px; padding: 0 0 0 4px; white-space: nowrap; }
.refs td div { display: flex; align-items: center; }
.refs td i { width: 37px; padding-left: 16px; }
.refs td b { width: 49px; padding-left: 17px; }
.ref-a col:nth-child(1) { width: 158px; }
.ref-a col:nth-child(2) { width: 142px; }
.ref-b col { width: 147px; }
.ref-b col:last-child { width: auto; }

/* Messages */
.messages { flex: 1; display: flex; flex-direction: column; margin: 4px 2px 3px 0; padding-right: 3px; }
.msgbody { flex: 1; display: grid; grid-template-columns: 44px minmax(0, 1fr); }
.msgs col:first-child { width: 711px; }
.tools { display: flex; flex-direction: column; align-items: center; gap: 12px; padding: 7px 0 0 8px; width: 37px; }
.grip { width: 16px; height: 4px; border: solid var(--line); border-width: 1px 0; }
.tools hr { width: 28px; height: 1px; background: var(--line); margin-top: -4px; }
.bottomtabs { display: flex; height: 43px; padding: 3px 0 6px; }
.bottomtabs button { display: flex; align-items: center; gap: 4px; padding: 2px 18px 0 16px; border-right: 1px solid var(--line); }
.bottomtabs button:first-child { padding: 2px 21px 0 23px; }
.bottomtabs .on { color: var(--blue); }

/* Properties */
.properties { display: flex; flex-direction: column; margin: 2px 1px 3px 4px; padding: 0 3px 3px; }
.properties > header { padding: 0 14px 3px; height: 57px; }
.ptools { position: relative; display: flex; height: 33px; padding: 0 9px 3px 3px; }
.ptools > button { display: flex; align-items: center; justify-content: center; width: 30px; height: 30px; }
.ptools > .on { background: #b0d7f0; }
.ptools hr { width: 1px; margin: 3px 6px 3px 3px; }
.ptools .filter { flex: 1; margin-left: 6px; }
.pgrid { flex: 1; border: 2px solid var(--line); background: #a0a0a0; }
.gut { width: 18px; }
.lab { width: 231px; }
.pgrid td, .pgrid th { height: 27px; padding: 1px 0 0 4px; text-align: left; white-space: nowrap; color: #000; background: #fff; border-bottom: 1px solid #d0d0d0; line-height: 22px; }
.pgrid tr td:first-child { padding: 0; background: #dcdcdc; border-color: #dcdcdc; }
.pgrid th { position: relative; font-size: 16px; font-weight: normal; background: #f0f0f0; border-right: 1px solid #d0d0d0; }
.pgrid .ro th { color: #505050; }
.pgrid .grey { color: #404040; }
.pgrid .cat th { height: 25px; padding: 1px 0 0 22px; font-weight: bold; color: var(--blue); background: #dcdcdc; border: 0; border-bottom: 1px solid #fff; }
.cat svg { position: absolute; right: 11px; top: 10px; }
.pgrid .d1 th { padding-left: 21px; }
.pgrid .d2 th { padding-left: 38px; }
.pgrid .d3 th { padding-left: 55px; }
.tw { position: absolute; top: 10px; left: 7px; }
.d2 .tw { left: 24px; }
.desc { height: 158px; border: 1px solid var(--line); border-top: 0; }

footer { height: 37px; padding: 9px 10px 0; background: var(--blue); color: #fff; }

/* Call-outs laid over the panels */
.mark { position: absolute; z-index: 2; border: 3px solid var(--red); }
.num { position: absolute; z-index: 3; width: 30px; height: 30px; border-radius: 15px; background: var(--red); color: #fff; font: 20px/30px "Open Sans", sans-serif; text-align: center; }
.tip { position: absolute; z-index: 3; height: 50px; padding: 0 9px; border-radius: 4px; background: rgba(0, 0, 0, 0.6); color: #fff; font: 24px/50px "Noto Sans", "Noto Sans CJK SC", sans-serif; white-space: nowrap; }
.tip::before { content: ""; position: absolute; left: -7px; top: 18px; border: solid transparent; border-width: 7px 7px 7px 0; border-right-color: rgba(0, 0, 0, 0.6); }
.m1 { left: 88px; top: -3px; width: 931px; height: 29px; }
.n1 { left: 1031px; top: 3px; }
.t1 { left: 1075px; top: -7px; width: 582px; }
.n2 { left: 156px; top: 4px; }
.t2 { left: 200px; top: -6px; width: 219px; }
.m2 { left: 10px; top: -6px; width: 335px; height: 35px; }
.n3 { left: 189px; top: -14px; }
.t3 { left: 233px; top: -24px; width: 219px; }
.m3 { left: 23px; top: -2px; width: 351px; height: 31px; }
```
